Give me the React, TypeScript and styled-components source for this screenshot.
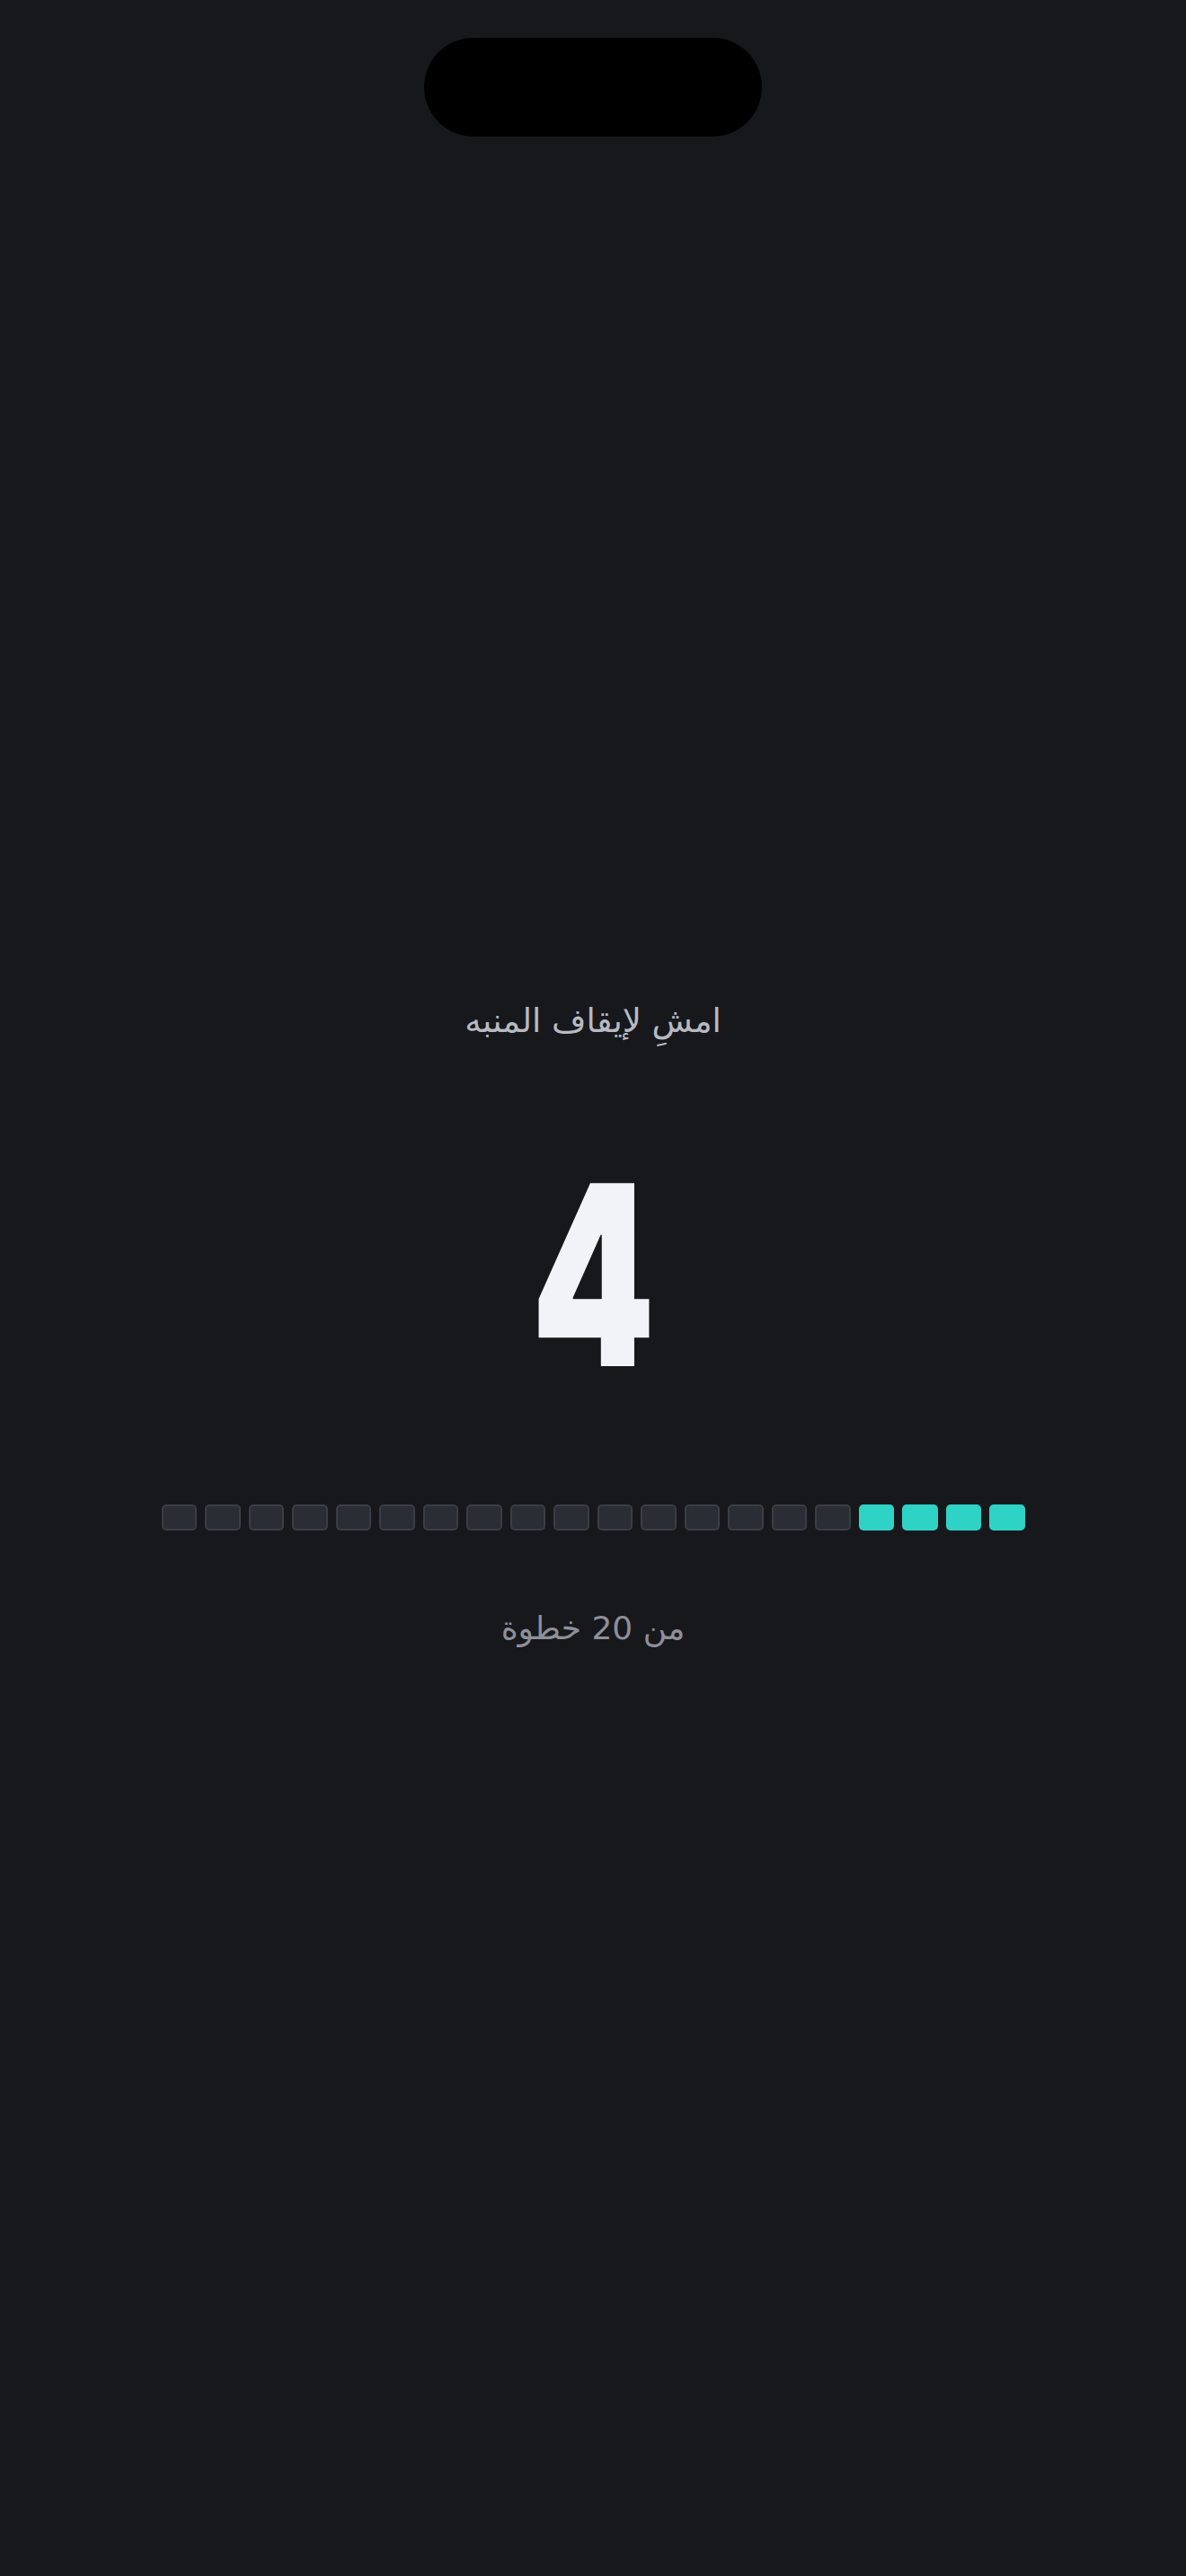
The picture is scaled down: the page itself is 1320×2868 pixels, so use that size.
import React from "react";
import styled, { createGlobalStyle } from "styled-components";

const Global = createGlobalStyle`
  html, body { margin: 0; padding: 0; background: #17181c; }
  * { box-sizing: border-box; }
`;

const Screen = styled.div`
  width: 1320px;
  min-height: 2868px;
  background: #17181c;
  display: flex;
  flex-direction: column;
  align-items: center;
  font-family: "DejaVu Sans", "Noto Sans", sans-serif;
`;

const Island = styled.div`
  margin-top: 42px;
  width: 376px;
  height: 110px;
  border-radius: 55px;
  background: #000;
`;

const Content = styled.main`
  margin-top: 960px;
  display: flex;
  flex-direction: column;
  align-items: center;
  direction: rtl;
`;

const Prompt = styled.h1`
  margin: 0;
  font-size: 37px;
  font-weight: 400;
  line-height: 50px;
  color: #b7bac2;
`;

const Count = styled.div`
  margin-top: 108px;
  font-family: "Inter", "Liberation Sans", sans-serif;
  font-weight: 900;
  font-size: 280px;
  line-height: 300px;
  color: #f1f3f8;
  transform: scaleX(0.7);
  direction: ltr;
`;

const Steps = styled.div`
  margin-top: 105px;
  display: flex;
  gap: 9px;
`;

const Cell = styled.div<{ $on: boolean }>`
  width: 39.5px;
  height: 29px;
  border-radius: 5px;
  background: ${(p) => (p.$on ? "#2ed3c5" : "#2a2d33")};
  border: 2px solid ${(p) => (p.$on ? "#2ed3c5" : "#3a3d45")};
`;

const Caption = styled.p`
  margin: 84px 0 0;
  font-size: 36px;
  line-height: 50px;
  color: #8d9099;
`;

export default function App() {
  const total = 20;
  const current = 4;
  return (
    <>
      <Global />
      <Screen>
        <Island />
        <Content>
          <Prompt>امشِ لإيقاف المنبه</Prompt>
          <Count>{current}</Count>
          <Steps>
            {Array.from({ length: total }, (_, i) => (
              <Cell key={i} $on={i < current} />
            ))}
          </Steps>
          <Caption>من {total} خطوة</Caption>
        </Content>
      </Screen>
    </>
  );
}
